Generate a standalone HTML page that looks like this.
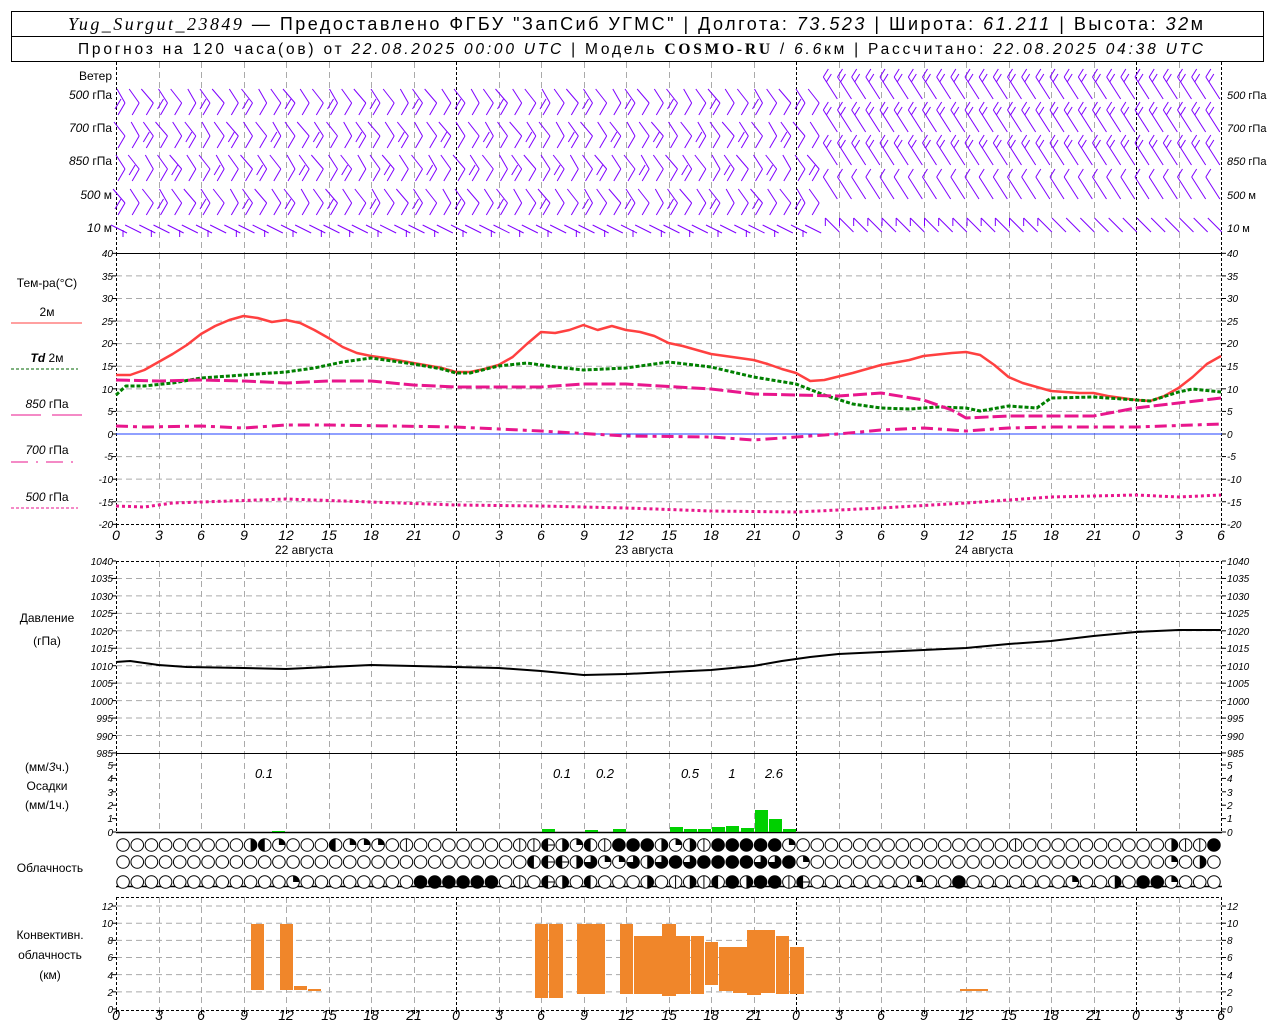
<!DOCTYPE html>
<html><head><meta charset="utf-8"><style>
html,body{margin:0;padding:0;background:#fff;}
svg{display:block;}
text{font-family:"Liberation Sans","DejaVu Sans",sans-serif;fill:#000;}
.t{font-size:10px;font-style:italic;}
.l{font-size:12px;}
.h{font-size:14px;font-style:italic;}
</style></head><body>
<svg id="s" width="1280" height="1024" viewBox="0 0 1280 1024" xmlns="http://www.w3.org/2000/svg">
<rect x="0" y="0" width="1280" height="1024" fill="#fff"/>
<rect x="11.5" y="11.5" width="1252" height="50" fill="none" stroke="#000"/>
<line x1="11" y1="36.5" x2="1264" y2="36.5" stroke="#000"/>
<text x="68" y="30" style="font-size:18px" textLength="1135" lengthAdjust="spacing"><tspan font-family="Liberation Serif" font-style="italic">Yug_Surgut_23849</tspan> — Предоставлено ФГБУ "ЗапСиб УГМС" | Долгота: <tspan font-style="italic">73.523</tspan> | Широта: <tspan font-style="italic">61.211</tspan> | Высота: <tspan font-style="italic">32</tspan>м</text>
<text x="78" y="54" style="font-size:15.5px" textLength="1125" lengthAdjust="spacing">Прогноз на 120 часа(ов) от <tspan font-style="italic">22.08.2025 00:00 UTC</tspan>  | Модель <tspan font-family="Liberation Serif" font-weight="bold">COSMO-RU</tspan> / <tspan font-style="italic">6.6</tspan>км | Рассчитано: <tspan font-style="italic">22.08.2025 04:38 UTC</tspan></text>

<g class="l" text-anchor="end">
<text x="112" y="80">Ветер</text>
<text x="112" y="99"><tspan font-style="italic">500</tspan> гПа</text>
<text x="112" y="132"><tspan font-style="italic">700</tspan> гПа</text>
<text x="112" y="165"><tspan font-style="italic">850</tspan> гПа</text>
<text x="112" y="199"><tspan font-style="italic">500</tspan>  м</text>
<text x="112" y="232"><tspan font-style="italic">10</tspan>   м</text>
</g>
<g class="l" style="font-size:11px">
<text x="1227" y="99"><tspan font-style="italic">500</tspan> гПа</text>
<text x="1227" y="132"><tspan font-style="italic">700</tspan> гПа</text>
<text x="1227" y="165"><tspan font-style="italic">850</tspan> гПа</text>
<text x="1227" y="199"><tspan font-style="italic">500</tspan>  м</text>
<text x="1227" y="232"><tspan font-style="italic">10</tspan>   м</text>
</g>

<g class="l" text-anchor="middle">
<text x="47" y="287">Тем-ра(°C)</text>
<text x="47" y="316">2м</text>
<text x="47" y="362"><tspan font-style="italic" font-weight="bold">Td</tspan>  2м</text>
<text x="47" y="408"><tspan font-style="italic">850</tspan>  гПа</text>
<text x="47" y="454"><tspan font-style="italic">700</tspan>  гПа</text>
<text x="47" y="501"><tspan font-style="italic">500</tspan>  гПа</text>
<text x="47" y="622">Давление</text>
<text x="47" y="645">(гПа)</text>
<text x="47" y="771">(мм/<tspan font-style="italic">3</tspan>ч.)</text>
<text x="47" y="790">Осадки</text>
<text x="47" y="809">(мм/1ч.)</text>
<text x="50" y="872">Облачность</text>
<text x="50" y="939">Конвективн.</text>
<text x="50" y="959">облачность</text>
<text x="50" y="979">(км)</text>
<text x="304" y="554">22 августа</text>
<text x="644" y="554">23 августа</text>
<text x="984" y="554">24 августа</text>
</g>
<line x1="11" y1="323" x2="82" y2="323" stroke="#ff4040" stroke-width="1"/>
<line x1="11" y1="369" x2="78" y2="369" stroke="#006400" stroke-dasharray="3,2"/>
<line x1="11" y1="415" x2="41" y2="415" stroke="#e8168c"/><line x1="52" y1="415" x2="82" y2="415" stroke="#e8168c"/>
<line x1="11" y1="462" x2="78" y2="462" stroke="#e8168c" stroke-dasharray="17,8,2,8"/>
<line x1="11" y1="508" x2="78" y2="508" stroke="#e8168c" stroke-dasharray="3,2"/>

<g class="t" text-anchor="end">
<text x="113" y="257">40</text><text x="113" y="280">35</text><text x="113" y="302">30</text><text x="113" y="325">25</text><text x="113" y="347">20</text><text x="113" y="370">15</text><text x="113" y="393">10</text><text x="113" y="415">5</text><text x="113" y="438">0</text><text x="113" y="460">-5</text><text x="113" y="483">-10</text><text x="113" y="506">-15</text><text x="113" y="528">-20</text>
<text x="113" y="565">1040</text><text x="113" y="582">1035</text><text x="113" y="600">1030</text><text x="113" y="617">1025</text><text x="113" y="635">1020</text><text x="113" y="652">1015</text><text x="113" y="670">1010</text><text x="113" y="687">1005</text><text x="113" y="705">1000</text><text x="113" y="722">995</text><text x="113" y="740">990</text><text x="113" y="757">985</text>
<text x="113" y="769">5</text><text x="113" y="782">4</text><text x="113" y="796">3</text><text x="113" y="809">2</text><text x="113" y="822">1</text><text x="113" y="836">0</text>
<text x="113" y="910">12</text><text x="113" y="927">10</text><text x="113" y="944">8</text><text x="113" y="961">6</text><text x="113" y="979">4</text><text x="113" y="996">2</text><text x="113" y="1013">0</text>
</g>
<g class="t">
<text x="1227" y="257">40</text><text x="1227" y="280">35</text><text x="1227" y="302">30</text><text x="1227" y="325">25</text><text x="1227" y="347">20</text><text x="1227" y="370">15</text><text x="1227" y="393">10</text><text x="1227" y="415">5</text><text x="1227" y="438">0</text><text x="1227" y="460">-5</text><text x="1227" y="483">-10</text><text x="1227" y="506">-15</text><text x="1227" y="528">-20</text>
<text x="1227" y="565">1040</text><text x="1227" y="582">1035</text><text x="1227" y="600">1030</text><text x="1227" y="617">1025</text><text x="1227" y="635">1020</text><text x="1227" y="652">1015</text><text x="1227" y="670">1010</text><text x="1227" y="687">1005</text><text x="1227" y="705">1000</text><text x="1227" y="722">995</text><text x="1227" y="740">990</text><text x="1227" y="757">985</text>
<text x="1227" y="769">5</text><text x="1227" y="782">4</text><text x="1227" y="796">3</text><text x="1227" y="809">2</text><text x="1227" y="822">1</text><text x="1227" y="836">0</text>
<text x="1227" y="910">12</text><text x="1227" y="927">10</text><text x="1227" y="944">8</text><text x="1227" y="961">6</text><text x="1227" y="979">4</text><text x="1227" y="996">2</text><text x="1227" y="1013">0</text>
</g>
<g class="h" text-anchor="middle">
<text x="116" y="540">0</text><text x="159" y="540">3</text><text x="201" y="540">6</text><text x="244" y="540">9</text><text x="286" y="540">12</text><text x="329" y="540">15</text><text x="371" y="540">18</text><text x="414" y="540">21</text><text x="456" y="540">0</text><text x="499" y="540">3</text><text x="541" y="540">6</text><text x="584" y="540">9</text><text x="626" y="540">12</text><text x="669" y="540">15</text><text x="711" y="540">18</text><text x="754" y="540">21</text><text x="796" y="540">0</text><text x="839" y="540">3</text><text x="881" y="540">6</text><text x="924" y="540">9</text><text x="966" y="540">12</text><text x="1009" y="540">15</text><text x="1051" y="540">18</text><text x="1094" y="540">21</text><text x="1136" y="540">0</text><text x="1179" y="540">3</text><text x="1221" y="540">6</text>
<text x="116" y="1020">0</text><text x="159" y="1020">3</text><text x="201" y="1020">6</text><text x="244" y="1020">9</text><text x="286" y="1020">12</text><text x="329" y="1020">15</text><text x="371" y="1020">18</text><text x="414" y="1020">21</text><text x="456" y="1020">0</text><text x="499" y="1020">3</text><text x="541" y="1020">6</text><text x="584" y="1020">9</text><text x="626" y="1020">12</text><text x="669" y="1020">15</text><text x="711" y="1020">18</text><text x="754" y="1020">21</text><text x="796" y="1020">0</text><text x="839" y="1020">3</text><text x="881" y="1020">6</text><text x="924" y="1020">9</text><text x="966" y="1020">12</text><text x="1009" y="1020">15</text><text x="1051" y="1020">18</text><text x="1094" y="1020">21</text><text x="1136" y="1020">0</text><text x="1179" y="1020">3</text><text x="1221" y="1020">6</text>
</g>
<g class="h" style="font-size:13px" text-anchor="middle">
<text x="264" y="778">0.1</text><text x="562" y="778">0.1</text><text x="605" y="778">0.2</text><text x="690" y="778">0.5</text><text x="732" y="778">1</text><text x="774" y="778">2.6</text>
</g>
<g id="g"></g>
</svg>
<script>
const NS="http://www.w3.org/2000/svg",G=document.getElementById('g');
function el(t,a){const e=document.createElementNS(NS,t);for(const k in a)e.setAttribute(k,a[k]);G.appendChild(e);return e;}
const X=h=>116+h*340/24;
const L=(x1,y1,x2,y2,s,w,d)=>el('line',{x1,y1,x2,y2,stroke:s||'#000','stroke-width':w||1,'stroke-dasharray':d||'none'});
const yT=t=>434-t*4.517, yP=p=>561+(1040-p)*3.49, yC=k=>1009-k*8.58, yR=r=>832-r*13.4;
for(let t=35;t>=-15;t-=5) if(t!==0) L(116,yT(t),1222,yT(t),'#aaa',1,'6,4');
for(let p=1035;p>=990;p-=5) L(116,yP(p),1222,yP(p),'#aaa',1,'6,4');
for(let k=2;k<=12;k+=2) L(116,yC(k),1222,yC(k),'#aaa',1,'6,4');
for(let h=0;h<=78;h+=3){const x=Math.round(X(h))+0.5,day=h%24===0||h===78;
 const c=day?'#000':'#aaa',d=day?'3,2':'6,4';
 [[62,253],[253,524],[561,753],[753,832],[897,1010]].forEach(r=>L(x,r[0],x,r[1],c,1,d));
 L(x,524,x,528,'#000');L(x,1010,x,1014,'#000');}
L(116,253.5,1222,253.5,'#000');L(116,561.5,1222,561.5,'#000',1,'3,2');L(116,753.5,1222,753.5,'#000');
L(116,832.5,1222,832.5,'#000',1.5);L(116,886.5,1222,886.5,'#000',1.5);L(116,897.5,1222,897.5,'#000',1,'3,2');
L(116,524.5,1222,524.5,'#000',1,'3,2');L(116,1010.5,1222,1010.5,'#000',1,'3,2');
L(116,434,1222,434,'#2040ff',1);
for(let t=40;t>=-20;t-=5){L(112,yT(t),116,yT(t));L(1222,yT(t),1226,yT(t));}
for(let p=1040;p>=985;p-=5){L(112,yP(p),116,yP(p));L(1222,yP(p),1226,yP(p));}
for(let r=0;r<=5;r++){L(112,yR(r),116,yR(r));L(1222,yR(r),1226,yR(r));}
for(let k=0;k<=12;k+=2){L(112,yC(k),116,yC(k));L(1222,yC(k),1226,yC(k));}
function curve(pts,fy,s,w,d){el('polyline',{points:pts.map(p=>X(p[0])+','+fy(p[1])).join(' '),fill:'none',stroke:s,'stroke-width':w,'stroke-dasharray':d||'none','stroke-linejoin':'round'});}
const I=y=>y;
curve([[0,375],[1,375],[2,370],[3,362],[4,354],[5,345],[6,334],[7,326],[8,320],[9,316],[10,318],[11,322],[12,320],[13,323],[14,330],[15,338],[16,347],[17,353],[18,356],[19,358],[21,363],[23,368],[24,372],[25,372],[26,369],[27,365],[28,357],[29,344],[30,332],[31,333],[32,330],[33,325],[34,330],[35,326],[36,330],[37,332],[38,336],[39,343],[40,346],[42,354],[44,358],[45,360],[46,364],[47,369],[48,373],[49,381],[50,380],[52,373],[54,365],[56,360],[57,356],[59,353],[60,352],[61,355],[62,365],[63,377],[64,383],[66,391],[68,393],[69,393],[70,396],[72,400],[73,401],[74,396],[75,388],[76,377],[77,364],[78,356]],I,'#ff4040',2.5);
curve([[0,395],[0.7,386],[2,386],[4,383],[6,378],[9,375],[12,372],[14,368],[16,362],[18,358],[21,364],[23,369],[24,373],[25,373],[27,366],[29,363],[31,367],[33,370],[36,368],[39,362],[42,367],[45,377],[48,384],[50,395],[52,404],[54,408],[56,409],[58,407],[60,408],[61,411],[63,406],[65,408],[66,398],[69,397],[72,400],[73,401],[75,392],[76,389],[78,392]],I,'#008000',3,'4,2');
curve([[0,380],[3,381],[6,380],[9,381],[12,383],[15,381],[18,381],[21,385],[24,387],[30,387],[33,384],[36,384],[42,389],[45,394],[48,395],[51,396],[54,393],[57,400],[59,410],[60,418],[63,416],[66,416],[69,416],[72,408],[75,403],[78,398]],I,'#e8168c',3,'14,4');
curve([[0,426],[2,427],[6,426],[9,428],[12,425],[15,425],[24,427],[30,431],[36,436],[42,437],[45,440],[48,437],[51,434],[54,430],[57,428],[60,431],[63,428],[66,427],[72,427],[78,424]],I,'#e8168c',3,'12,5,4,5');
curve([[0,506],[2,507],[4,503],[6,502],[12,499],[18,502],[24,505],[30,506],[36,508],[42,511],[48,512],[54,508],[60,503],[63,500],[66,497],[72,495],[75,497],[78,495]],I,'#e8168c',3,'3,3');
curve([[0,662],[1,661],[3,665],[5,667],[9,668],[12,669],[15,667],[18,665],[21,666],[24,667],[27,668],[30,671],[33,675],[36,674],[39,672],[42,670],[45,666],[47,661],[49,657],[51,654],[54,652],[57,650],[60,648],[63,644],[66,641],[69,636],[72,632],[75,630],[78,630]],I,'#000',2);
[[272,831],[542,829],[585,830],[613,829],[670,827],[684,829],[698,829],[712,827],[726,826],[741,828],[755,810],[769,819],[783,829]].forEach(b=>el('rect',{x:b[0],y:b[1],width:13,height:832-b[1],fill:'#00d000'}));
[[251,924,13,990],[280,924,13,990],[294,986,13,990],[308,989,13,991],[960,989,28,991],[535,924,13,998],[549,924,14,998],[577,924,28,994],[620,924,13,994],[634,936,28,994],[662,924,14,996],[676,936,14,994],[691,936,13,994],[705,942,13,985],[719,947,14,991],[733,947,14,993],[747,930,14,995],[761,930,14,993],[776,936,13,994],[790,947,14,994]].forEach(b=>el('rect',{x:b[0],y:b[1],width:b[2],height:b[3]-b[1],fill:'#f0862a'}));
function row(y,spec){const a=[];for(let i=0;i<78;i++)a.push('e');for(const k in spec)a[k]=spec[k];
 a.forEach((c,i)=>{const cx=X(i)+7.08,r=6.3;
  if(c==='f'){el('circle',{cx,cy:y,r,fill:'#000',stroke:'#000'});return;}
  el('circle',{cx,cy:y,r,fill:'#fff',stroke:'#000'});
  if(c==='r')el('path',{d:`M${cx},${y-r}A${r},${r} 0 0 1 ${cx},${y+r}Z`,fill:'#000'});
  if(c==='l')el('path',{d:`M${cx},${y-r}A${r},${r} 0 0 0 ${cx},${y+r}Z`,fill:'#000'});
  if(c==='q')el('path',{d:`M${cx},${y}L${cx},${y-r}A${r},${r} 0 0 1 ${cx+r},${y}Z`,fill:'#000'});
  if(c==='t')el('path',{d:`M${cx},${y}L${cx},${y-r}A${r},${r} 0 1 1 ${cx-r},${y}Z`,fill:'#000'});
  if(c==='v')L(cx,y-r,cx,y+r);
  if(c==='h'){el('path',{d:`M${cx},${y-r}A${r},${r} 0 0 0 ${cx},${y+r}Z`,fill:'#000'});L(cx,y,cx+r,y);}
 });}
row(845,{9:'r',10:'l',11:'q',15:'l',16:'q',17:'q',18:'q',20:'v',28:'v',29:'v',30:'h',31:'r',32:'q',33:'l',34:'v',35:'f',36:'f',37:'f',38:'r',39:'q',40:'r',41:'v',42:'f',43:'f',44:'f',45:'f',46:'f',47:'q',63:'v',74:'r',75:'v',76:'v',77:'f'});
row(862,{29:'l',30:'h',31:'h',32:'r',33:'t',34:'q',35:'q',36:'t',37:'r',38:'t',39:'f',40:'t',41:'f',42:'f',43:'f',44:'f',45:'t',46:'t',47:'f',48:'q',74:'q',76:'r'});
row(882,{12:'q',21:'f',22:'f',23:'f',24:'f',25:'f',26:'f',28:'v',30:'h',31:'r',33:'l',37:'r',39:'v',40:'r',41:'v',42:'l',43:'f',44:'r',45:'f',46:'f',47:'v',48:'h',56:'q',59:'f',67:'q',70:'r',72:'f',73:'f',74:'q'});
const ys=[95,128,161,195,228],P='#7f00ff';
for(let j=0;j<5;j++)for(let i=0;i<78;i++){
 const x=X(i)+9,y=ys[j];
 if(i<50){
  if(j===4){L(x-14,y-3,x+2,y+5,P);if(i%2===0)L(x-2,y+2,x-2,y+9,P);continue;}
  const dx=8+((i*7+j*3)%5), dy=14;
  L(x-dx,y-dy+8,x,y+8,P);L(x,y+8,x-7,y+20,P);
  if((i+j)%3===0)L(x-4,y+4,x-10,y+14,P);
 } else {
  if(j===4){L(x-8,y-10,x+6,y+4,P);if(i<66)L(x-8,y-10,x-8,y-2,P);continue;}
  L(x-10,y-18,x+4,y+4,P);L(x-10,y-18,x-5,y-26,P);
  if(j<3)L(x-7,y-13,x-2,y-21,P);
 }
}
</script>
</body></html>
